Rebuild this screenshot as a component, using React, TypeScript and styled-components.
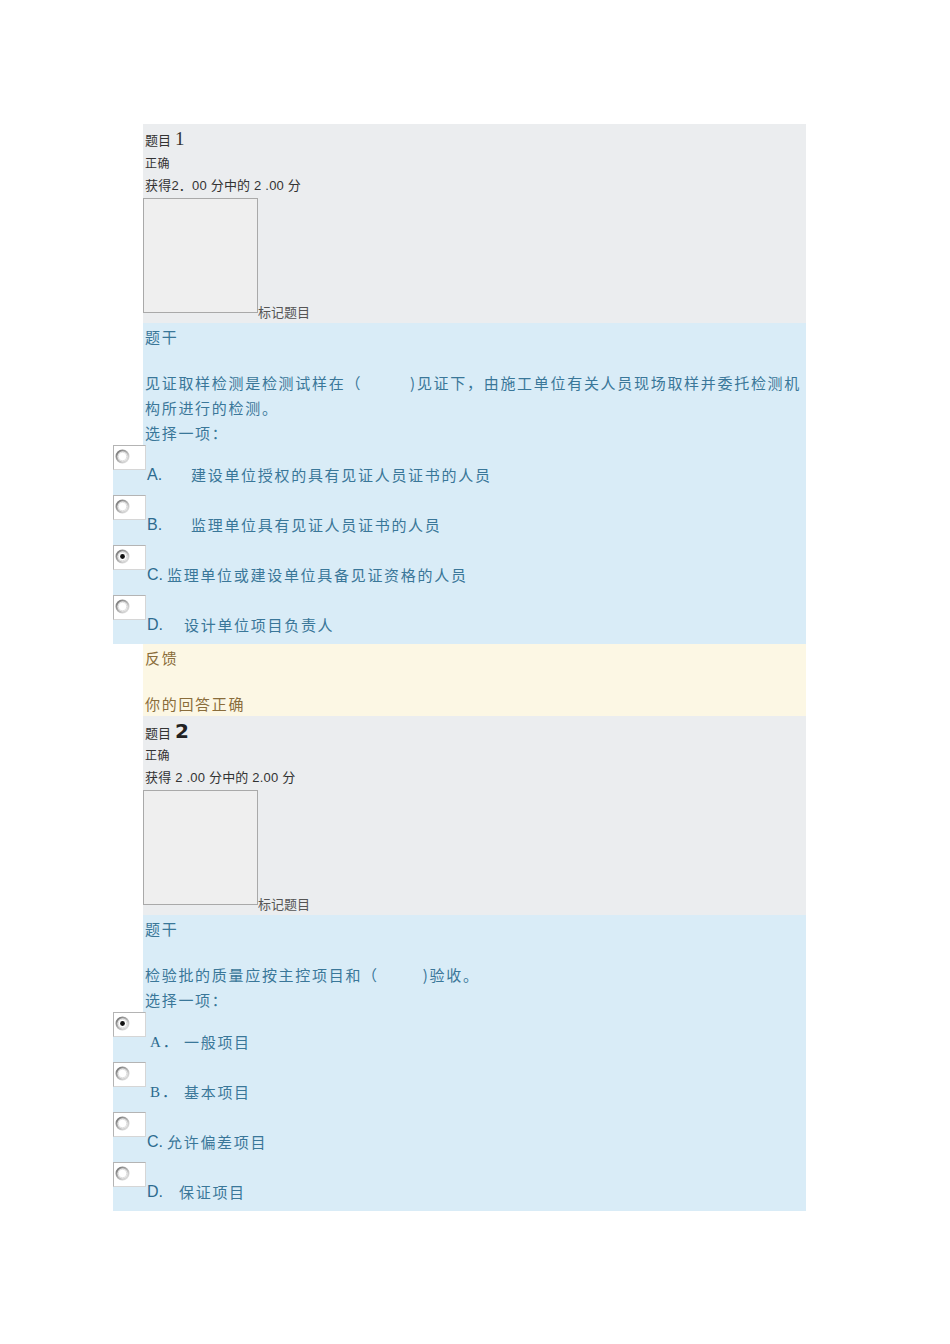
import React from "react";
import styled, { createGlobalStyle } from "styled-components";

const GlobalStyle = createGlobalStyle`
  body {
    margin: 0;
    background: #ffffff;
    font-family: "Liberation Sans", "Noto Sans CJK SC", sans-serif;
  }
`;

const Page = styled.main`
  width: 663px;
  margin: 124px 0 0 143px;
  padding-bottom: 120px;
`;

const Info = styled.section`
  background: #ebedef;
  padding: 3px 0 10px 0;
  color: #333333;
`;

const QNo = styled.div`
  padding-left: 2px;
  height: 24px;
  line-height: 24px;
  font-size: 13px;
  font-family: "Noto Sans CJK SC", sans-serif;
`;

const Num = styled.span<{ $bold?: boolean }>`
  margin-left: 4px;
  font-size: ${(p) => (p.$bold ? "20px" : "19px")};
  font-weight: ${(p) => (p.$bold ? 700 : 400)};
  font-family: ${(p) =>
    p.$bold ? '"DejaVu Sans", sans-serif' : '"Liberation Serif", serif'};
  color: ${(p) => (p.$bold ? "#222" : "#333")};
`;

const State = styled.div`
  padding-left: 2px;
  height: 23px;
  line-height: 23px;
  font-size: 12px;
  letter-spacing: 0.5px;
  font-family: "Noto Sans CJK SC", sans-serif;
`;

const Grade = styled.div`
  padding-left: 2px;
  height: 24px;
  line-height: 24px;
  font-size: 13px;
  letter-spacing: 0.2px;
  font-family: "Liberation Sans", "Noto Sans CJK SC", sans-serif;
`;

const FlagRow = styled.div`
  display: flex;
  align-items: flex-end;
`;

const FlagBox = styled.div`
  width: 113px;
  height: 113px;
  border: 1px solid #a9a9a9;
  background: #efefef;
`;

const FlagLabel = styled.span`
  font-size: 13px;
  line-height: 14px;
  margin-bottom: -6px;
  color: #555555;
  font-family: "Noto Sans CJK SC", sans-serif;
`;

const Content = styled.section`
  background: #d9ecf7;
  color: #3a7799;
  padding-top: 1px;
  font-family: "Noto Sans CJK SC", sans-serif;
  font-size: 15px;
  letter-spacing: 1.7px;
`;

const Line = styled.div<{ $gap?: number }>`
  padding-left: 2px;
  line-height: 25px;
  margin-bottom: ${(p) => p.$gap ?? 0}px;
`;

const Blank = styled.span<{ $w: number }>`
  display: inline-block;
  width: ${(p) => p.$w}px;
  height: 1px;
`;

const Options = styled.div`
  margin-left: -30px;
  background: #d9ecf7;
`;

const OptionRow = styled.div<{ $last?: boolean }>`
  display: flex;
  align-items: flex-start;
  height: ${(p) => (p.$last ? 49 : 50)}px;
`;

const RadioBox = styled.div`
  box-sizing: border-box;
  width: 33px;
  height: 25px;
  background: #ffffff;
  border: 1px solid #b4b4b4;
  border-right-color: #d6d6d6;
  border-bottom-color: #d6d6d6;
  padding: 1px 0 0 1px;
  flex-shrink: 0;
`;

const OptLabel = styled.div`
  display: flex;
  margin-top: 20px;
  line-height: 20px;
`;

const Letter = styled.span<{ $w: number; $serif?: boolean; $pad?: number }>`
  display: inline-block;
  width: ${(p) => p.$w}px;
  padding-left: ${(p) => p.$pad ?? 1}px;
  box-sizing: border-box;
  letter-spacing: ${(p) => (p.$serif ? "2px" : "0")};
  font-family: ${(p) =>
    p.$serif
      ? '"Liberation Serif", "Noto Sans CJK SC", serif'
      : '"Liberation Sans", sans-serif'};
  font-size: ${(p) => (p.$serif ? "15px" : "16px")};
  color: #2d6b8f;
`;

const Feedback = styled.section`
  background: #fcf7e4;
  color: #8a6d3b;
  padding-top: 1px;
  font-family: "Noto Sans CJK SC", sans-serif;
  font-size: 15px;
  letter-spacing: 1.7px;
`;

const Radio = ({ checked }: { checked?: boolean }) => (
  <svg width="15" height="15" viewBox="0 0 15 15">
    <defs>
      <linearGradient id="ring" x1="0" y1="0" x2="1" y2="1">
        <stop offset="0" stopColor="#6f6f6f" />
        <stop offset="0.55" stopColor="#b8b8b8" />
        <stop offset="1" stopColor="#e8e8e8" />
      </linearGradient>
    </defs>
    <circle cx="7.5" cy="7.5" r="6" fill="#ffffff" stroke="url(#ring)" strokeWidth="2" />
    <circle cx="7.5" cy="7.5" r="4.3" fill="none" stroke="#dcdcdc" strokeWidth="1" />
    {checked && <circle cx="7.5" cy="7.5" r="2.4" fill="#111111" />}
  </svg>
);

type Opt = { letter: string; w: number; text: string; serif?: boolean; pad?: number; checked?: boolean };

type Question = {
  no: string;
  bold?: boolean;
  grade: string;
  before: string;
  blank: number;
  after: string;
  options: Opt[];
  feedback?: string;
};

const questions: Question[] = [
  {
    no: "1",
    grade: "获得2．00 分中的 2 .00 分",
    before: "见证取样检测是检测试样在（",
    blank: 48,
    after: ")见证下，由施工单位有关人员现场取样并委托检测机构所进行的检测。",
    options: [
      { letter: "A.", w: 45, text: "建设单位授权的具有见证人员证书的人员" },
      { letter: "B.", w: 45, text: "监理单位具有见证人员证书的人员" },
      { letter: "C.", w: 21, text: "监理单位或建设单位具备见证资格的人员", checked: true },
      { letter: "D.", w: 38, text: "设计单位项目负责人" },
    ],
    feedback: "你的回答正确",
  },
  {
    no: "2",
    bold: true,
    grade: "获得 2 .00 分中的 2.00 分",
    before: "检验批的质量应按主控项目和（",
    blank: 44,
    after: ")验收。",
    options: [
      { letter: "A．", w: 38, pad: 4, serif: true, text: "一般项目", checked: true },
      { letter: "B．", w: 38, pad: 4, serif: true, text: "基本项目" },
      { letter: "C.", w: 21, text: "允许偏差项目" },
      { letter: "D.", w: 33, text: "保证项目" },
    ],
  },
];

const App = () => {
  return (
    <Page>
      <GlobalStyle />
      {questions.map((q) => (
        <React.Fragment key={q.no}>
          <Info>
            <QNo>
              题目<Num $bold={q.bold}>{q.no}</Num>
            </QNo>
            <State>正确</State>
            <Grade>{q.grade}</Grade>
            <FlagRow>
              <FlagBox />
              <FlagLabel>标记题目</FlagLabel>
            </FlagRow>
          </Info>
          <Content>
            <Line $gap={21}>题干</Line>
            <Line>
              {q.before}
              <Blank $w={q.blank} />
              {q.after}
            </Line>
            <Line>选择一项：</Line>
            <Options>
              {q.options.map((o, i) => (
                <OptionRow key={o.letter} $last={i === q.options.length - 1}>
                  <RadioBox>
                    <Radio checked={o.checked} />
                  </RadioBox>
                  <OptLabel>
                    <Letter $w={o.w} $serif={o.serif} $pad={o.pad}>
                      {o.letter}
                    </Letter>
                    <span>{o.text}</span>
                  </OptLabel>
                </OptionRow>
              ))}
            </Options>
          </Content>
          {q.feedback && (
            <Feedback>
              <Line $gap={21}>反馈</Line>
              <Line>{q.feedback}</Line>
            </Feedback>
          )}
        </React.Fragment>
      ))}
    </Page>
  );
};

export default App;
